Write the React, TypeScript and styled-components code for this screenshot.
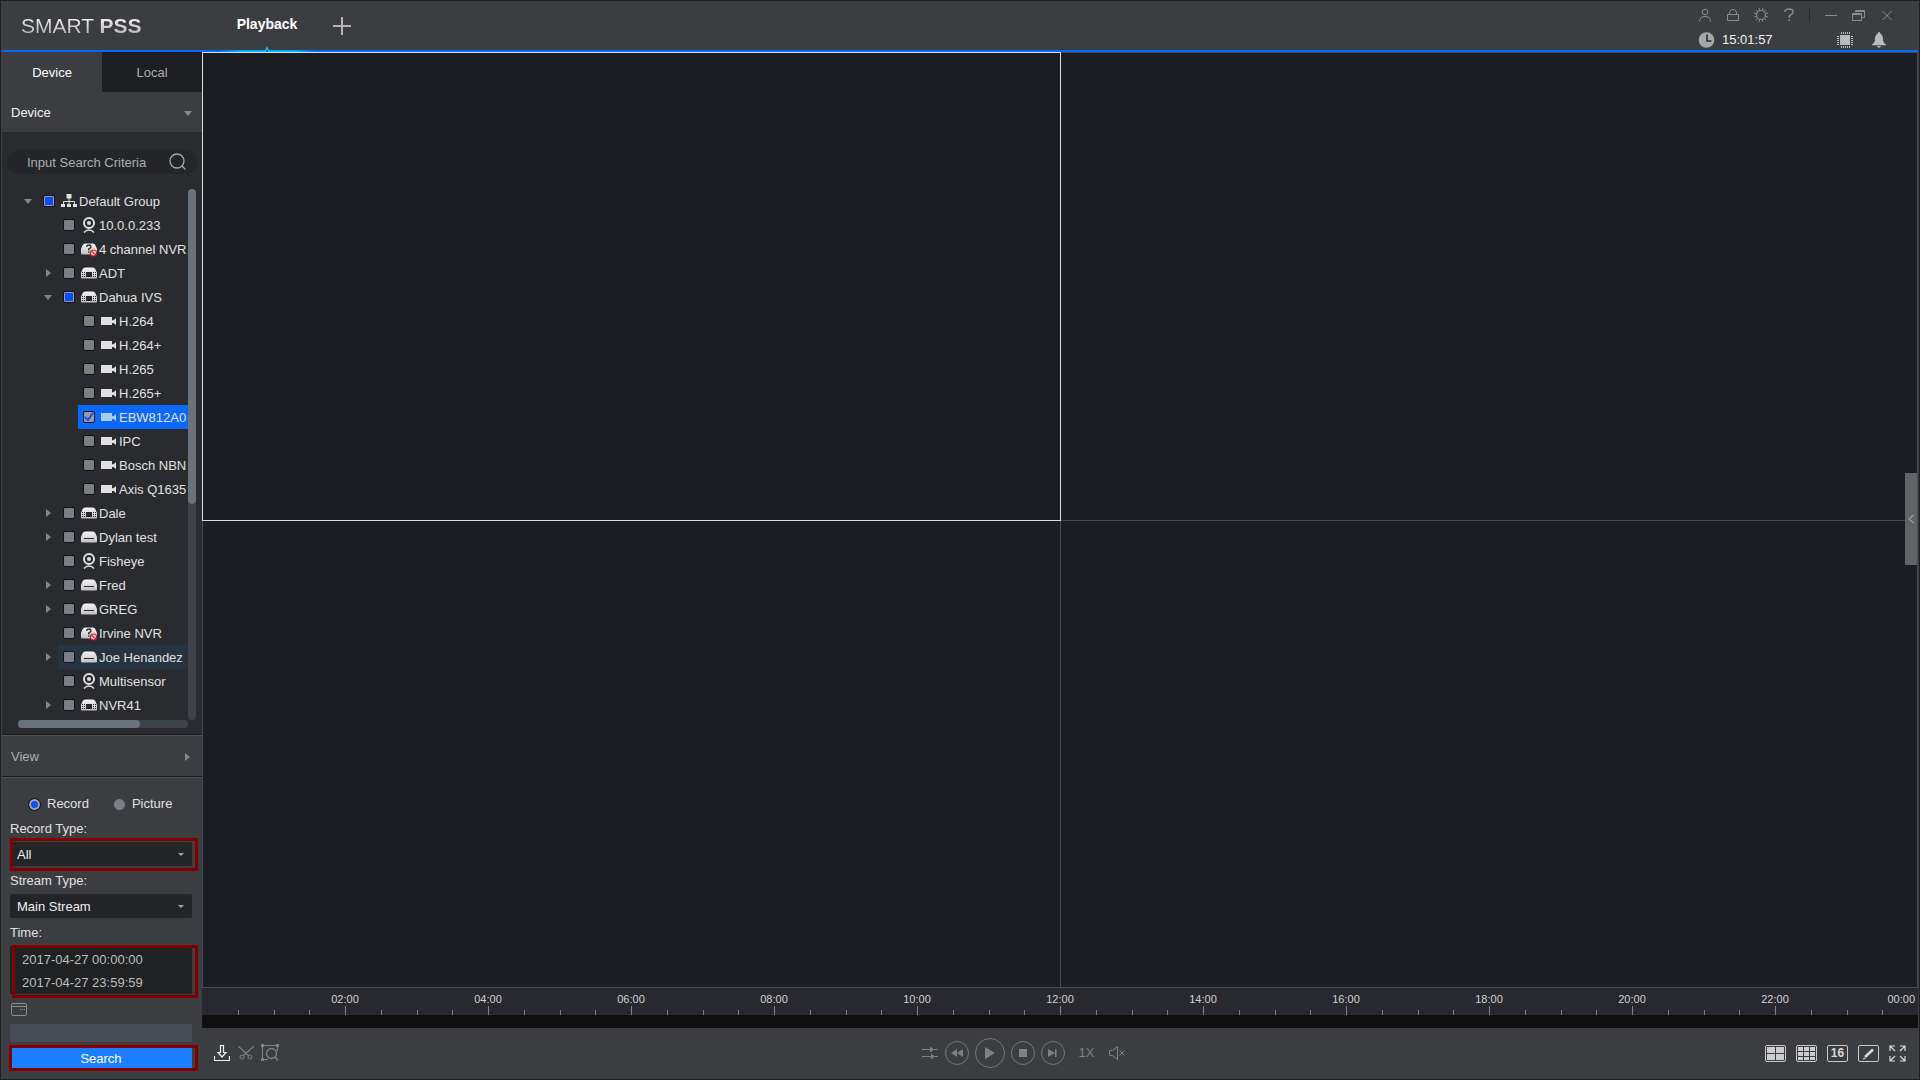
import React, { useState } from "react";
import styled, { createGlobalStyle, css } from "styled-components";

const c = {
  chrome: "#3b3d41",
  panel: "#2a2b2f",
  dark: "#1d1e22",
  video: "#1a1d21",
  line: "#454b5a",
  text: "#e0e0e0",
  muted: "#acadaf",
  icon: "#8b8c8f",
  arrow: "#858689",
  blue: "#0b68fb",
  marker: "#840000",
};

const GlobalStyle = createGlobalStyle`
  * { box-sizing: border-box; }
  body {
    margin: 0;
    background: #17181b;
    color: ${c.text};
    font: 13px/16px "Liberation Sans", Arial, sans-serif;
  }
  button, input, select { font: inherit; color: inherit; }
  button { padding: 0; border: 0; background: none; cursor: pointer; }
  ul, ol { margin: 0; padding: 0; list-style: none; }
`;

const Window = styled.div`
  display: flex;
  flex-direction: column;
  height: 100vh;
  min-height: 900px;
  padding: 0 1px 1px;
  background: ${c.chrome};
  border: 1px solid #1e1f22;
`;

const Header = styled.header`
  display: flex;
  height: 51px;
  flex: none;
  border-bottom: 2px solid ${c.blue};
`;

const Logo = styled.h1`
  width: 215px;
  margin: 0;
  padding: 13px 0 0 19px;
  font-size: 21px;
  line-height: 24px;
  font-weight: 400;
  color: transparent;
  background: linear-gradient(#f4f4f4 16px, #b4b4b4 34px);
  background-clip: text;
`;

const PageTab = styled.button`
  position: relative;
  width: 100px;
  height: 49px;
  padding-bottom: 4px;
  font-size: 14px;
  font-weight: 700;
  color: #fff;
  &::after {
    content: "";
    position: absolute;
    left: 0;
    right: 0;
    bottom: -2px;
    height: 2px;
    background: linear-gradient(90deg, ${c.blue}, #00b4f5 25%, #00b4f5 75%, ${c.blue});
  }
`;

const TabPointer = styled.svg`
  position: absolute;
  left: 47px;
  bottom: -2px;
  z-index: 1;
`;

const AddTab = styled.button`
  width: 50px;
  height: 50px;
  color: #b5b5b5;
  padding-top: 4px;
`;

const HeaderTools = styled.div`
  margin-left: auto;
  width: 227px;
  padding-right: 17px;
`;

const ToolRow = styled.div`
  display: flex;
  align-items: center;
  height: 24px;
  padding-top: 4px;
  &:last-child {
    height: 27px;
    padding: 2px 5px 0 7px;
  }
`;

const IconButton = styled.button<{ $w?: number }>`
  display: flex;
  align-items: center;
  justify-content: center;
  width: ${(p) => p.$w ?? 28}px;
  height: 22px;
  color: ${c.icon};
  svg { display: block; }
`;

const ToolSeparator = styled.span`
  width: 1px;
  height: 12px;
  margin: 0 7px 0 6px;
  background: #27282b;
`;

const Clock = styled.time`
  margin: 0 auto 0 7px;
  color: #f2f2f2;
`;

const Body = styled.div`
  display: flex;
  flex: 1;
  min-height: 0;
`;

const Sidebar = styled.aside`
  display: flex;
  flex-direction: column;
  width: 200px;
  flex: none;
`;

const Tabs = styled.div`
  display: grid;
  grid-template-columns: 1fr 1fr;
  height: 40px;
`;

const Tab = styled.button<{ $active?: boolean }>`
  padding: 2px 0 0;
  color: ${(p) => (p.$active ? "#fff" : c.muted)};
  background: ${(p) => (p.$active ? "none" : c.dark)};
`;

const SectionButton = styled.button<{ $bordered?: boolean }>`
  display: flex;
  align-items: center;
  justify-content: space-between;
  height: 40px;
  flex: none;
  padding: 2px 10px 0 9px;
  color: #f2f2f2;
  svg { color: ${c.arrow}; }
  ${(p) =>
    p.$bordered &&
    css`
      height: 43px;
      padding-right: 12px;
      color: ${c.muted};
      border-top: 1px solid #1b1c1f;
      border-bottom: 1px solid #1b1c1f;
      box-shadow: inset 0 1px #505257, 0 1px #505257;
    `}
`;

const TreePanel = styled.section`
  display: flex;
  flex-direction: column;
  flex: 1;
  min-height: 0;
  padding: 18px 5px 6px;
  background: ${c.panel};
`;

const SearchField = styled.div`
  display: flex;
  align-items: center;
  height: 24px;
  flex: none;
  padding: 0 10px 0 20px;
  margin-bottom: 15px;
  border-radius: 12px;
  background: #242529;
  color: #a5a6a8;
  input {
    flex: 1;
    min-width: 0;
    padding: 2px 0 0;
    border: 0;
    outline: 0;
    background: none;
  }
  input::placeholder { color: ${c.muted}; opacity: 1; }
`;

const TreeBody = styled.div`
  display: grid;
  grid-template-columns: 1fr 8px;
  flex: 1;
  min-height: 0;
  padding-right: 1px;
`;

const TreeList = styled.ul`
  overflow: hidden;
  min-width: 0;
  padding-left: 11px;
`;

const TreeRow = styled.li<{ $level: number }>`
  display: flex;
  height: 24px;
  padding-left: ${(p) => p.$level * 20}px;
`;

const Expander = styled.button`
  display: flex;
  align-items: center;
  justify-content: center;
  width: 20px;
  flex: none;
  color: ${c.arrow};
`;

const TreeItem = styled.label<{ $state?: "selected" | "hover" }>`
  display: flex;
  align-items: center;
  flex: 1;
  padding-left: 5px;
  white-space: nowrap;
  background: ${(p) =>
    p.$state === "selected" ? c.blue : p.$state === "hover" ? "#263340" : "none"};
  svg {
    flex: none;
    margin: 0 2px 0 6px;
    color: ${(p) => (p.$state === "selected" ? "#a8cdf2" : "#e0e0e0")};
  }
`;

const TreeName = styled.span`
  padding-top: 2px;
`;

const CheckBox = styled.input<{ $partial?: boolean }>`
  appearance: none;
  width: 12px;
  height: 12px;
  flex: none;
  margin: 0;
  border: 1px solid #111214;
  border-radius: 2px;
  background: #7c7e86;
  ${(p) =>
    p.$partial &&
    css`
      background: #0a4dff;
      box-shadow: inset 0 0 0 1px #9a9ba0;
    `}
  &:checked {
    background: #9a9ba0 url("data:image/svg+xml,%3Csvg xmlns='http://www.w3.org/2000/svg' viewBox='0 0 10 10'%3E%3Cpath d='M1 5l3 3 5-7' fill='none' stroke='%230a4dff' stroke-width='2'/%3E%3C/svg%3E") center / 10px 10px no-repeat;
  }
`;

const ScrollTrack = styled.div<{ $horizontal?: boolean }>`
  border-radius: 4px;
  background: #3e4349;
  &::before {
    content: "";
    display: block;
    border-radius: 4px;
    background: #6b7279;
    width: ${(p) => (p.$horizontal ? "72%" : "8px")};
    height: ${(p) => (p.$horizontal ? "8px" : "59.4%")};
  }
  ${(p) => p.$horizontal && "height: 8px; flex: none; margin: 0 9px 0 11px;"}
`;

const Query = styled.form`
  display: flex;
  flex-direction: column;
  flex: none;
  padding: 19px 10px 10px 8px;
`;

const RadioRow = styled.div`
  display: flex;
  gap: 25px;
  padding-left: 19px;
  height: 16px;
  margin-bottom: 9px;
  label { display: flex; align-items: center; gap: 7px; }
  input {
    appearance: none;
    width: 11px;
    height: 11px;
    margin: 0;
    border-radius: 50%;
    background: #7c7e86;
  }
  input:checked {
    background: #0a4dff;
    border: 2px solid #a3a4a8;
    outline: 1px solid #111214;
  }
`;

const Field = styled.div<{ $marked?: boolean }>`
  position: relative;
  height: 24px;
  margin: 5px 0 7px;
  ${(p) =>
    p.$marked &&
    css`
      &::after {
        content: "";
        position: absolute;
        inset: -4px -6px -5px 0;
        border: 3px solid ${c.marker};
        pointer-events: none;
      }
    `}
  select {
    display: block;
    appearance: none;
    width: 100%;
    height: 24px;
    padding: 1px 8px 0 7px;
    border: 0;
    border-radius: 2px;
    background: #242529;
    color: #f0f0f0;
  }
  svg {
    position: absolute;
    right: 8px;
    top: 11px;
    color: #a2a3a5;
    pointer-events: none;
  }
`;

const TimeRange = styled.div`
  position: relative;
  display: grid;
  grid-template-rows: 1fr 1fr;
  height: 48px;
  margin: 5px 0 9px;
  padding: 2px 12px 0;
  background: #202122;
  color: #bdbdbd;
  input { width: 100%; padding: 0; border: 0; outline: 0; background: none; }
  &::after {
    content: "";
    position: absolute;
    inset: -1px -6px -4px 2px;
    border: 3px solid ${c.marker};
    pointer-events: none;
  }
`;

const CalendarButton = styled.button`
  width: 18px;
  height: 13px;
  color: #8b8c8f;
  svg { display: block; }
`;

const ResultStrip = styled.div`
  height: 18px;
  margin: 8px 0 6px;
  border-radius: 2px;
  background: #474b54;
`;

const SearchButton = styled.button`
  position: relative;
  height: 20px;
  margin-left: 2px;
  padding: 1px 2px 0 0;
  background: #1d7dff;
  color: #fff;
  &::after {
    content: "";
    position: absolute;
    inset: -3px -6px -3px -3px;
    border: 3px solid ${c.marker};
  }
`;

const Fields = styled.div`
  display: flex;
  flex-direction: column;
`;

const Main = styled.main`
  display: flex;
  flex-direction: column;
  flex: 1;
  min-width: 0;
`;

const VideoGrid = styled.div`
  position: relative;
  display: grid;
  grid-template: 1fr 1fr / 1fr 1fr;
  flex: 1;
  background: ${c.video};
  border: solid ${c.line};
  border-width: 0 1px 1px 0;
`;

const Pane = styled.div<{ $selected?: boolean }>`
  border: solid ${c.line};
  border-width: 1px 0 0 1px;
  ${(p) =>
    p.$selected &&
    css`
      z-index: 1;
      margin: 0 -1px -1px 0;
      border: 1px solid #dcdcdc;
    `}
`;

const DrawerHandle = styled.button`
  position: absolute;
  z-index: 2;
  top: calc(50% - 47px);
  right: 0;
  display: flex;
  align-items: center;
  justify-content: center;
  width: 12px;
  height: 92px;
  background: #606466;
  color: #979a9b;
`;

const Timeline = styled.div`
  height: 40px;
  flex: none;
  background: #28292e;
  border-bottom: 13px solid #0f0f0f;
`;

const HourLabels = styled.ol`
  display: grid;
  grid-template-columns: repeat(24, 1fr);
  height: 18px;
  padding-top: 3px;
  font-size: 11px;
  color: #d0d0d0;
`;

const HourLabel = styled.li<{ $start: number; $last?: boolean }>`
  grid-row: 1;
  grid-column: ${(p) => p.$start} / span ${(p) => (p.$last ? 1 : 2)};
  text-align: ${(p) => (p.$last ? "right" : "center")};
  padding-right: ${(p) => (p.$last ? 3 : 0)}px;
`;

const Ticks = styled.div`
  display: grid;
  grid-template-columns: repeat(48, 1fr);
  align-items: end;
  height: 9px;
`;

const Tick = styled.span<{ $major: boolean }>`
  height: ${(p) => (p.$major ? 9 : 5)}px;
  border-left: 1px solid #7f8186;
  &:first-child { border: 0; }
`;

const Controls = styled.footer`
  display: grid;
  grid-template-columns: 1fr auto 1fr;
  align-items: center;
  height: 50px;
  flex: none;
`;

const ControlGroup = styled.div<{ $kind: "edit" | "play" | "view" }>`
  display: flex;
  align-items: center;
  color: #808183;
  ${(p) => p.$kind === "edit" && "padding-left: 8px;"}
  ${(p) => p.$kind === "play" && "gap: 6px; margin-right: 74px;"}
  ${(p) => p.$kind === "view" && "gap: 10px; justify-content: flex-end; padding-right: 12px; color: #d8d8d8;"}
`;

const ControlButton = styled.button<{ $w?: number; $bright?: boolean }>`
  display: flex;
  align-items: center;
  justify-content: center;
  width: ${(p) => p.$w ?? 24}px;
  height: 32px;
  flex: none;
  color: ${(p) => (p.$bright ? "#f0f0f0" : "inherit")};
`;

const RoundButton = styled.button<{ $size?: number }>`
  display: flex;
  align-items: center;
  justify-content: center;
  width: ${(p) => p.$size ?? 24}px;
  height: ${(p) => p.$size ?? 24}px;
  border: 1px solid #77787b;
  border-radius: 50%;
`;

const LayoutButton = styled.button`
  display: flex;
  align-items: center;
  justify-content: center;
  width: 21px;
  height: 17px;
  border: 1px solid #c8c8c8;
  border-radius: 2px;
  font-size: 12px;
  font-weight: 700;
  line-height: 15px;
`;

/* ---- icons ---- */

const Svg = ({ w, h, children, ...rest }: any) => (
  <svg width={w} height={h} viewBox={`0 0 ${w} ${h}`} fill="none" stroke="currentColor" aria-hidden="true" {...rest}>
    {children}
  </svg>
);

const Down = () => (
  <Svg w={8} h={5} stroke="none"><path d="M0 0h8L4 5z" fill="currentColor" /></Svg>
);
const Right = () => (
  <Svg w={5} h={8} stroke="none"><path d="M0 0v8l5-4z" fill="currentColor" /></Svg>
);

const ShadeDefs = styled.svg`
  position: absolute;
`;

const Shade = () => (
  <ShadeDefs width="0" height="0" aria-hidden="true">
    <defs>
      <linearGradient id="shade" x1="0" y1="0" x2="0" y2="1">
        <stop offset="0" stopColor="#f6f6f6" />
        <stop offset="1" stopColor="#bfbfbf" />
      </linearGradient>
    </defs>
  </ShadeDefs>
);

type Kind = "group" | "fisheye" | "unknown" | "nvr" | "dvr" | "camera";

const HOUSING = "M4 2.500h8q1.800.3 2.800 2.500L16 8v4.500q0 1-1 1H1q-1 0-1-1V8l1.200-3Q2.200 2.800 4 2.500z";

const DeviceIcon = ({ kind }: { kind: Kind }) => {
  if (kind === "group")
    return (
      <Svg w={16} h={16}>
        <path d="M8 5v6M2.500 12V8.500h11V12" />
        <path d="M5.500 1h5v4.500h-5zM0 11h4v3H0zM6 11h4v3H6zM12 11h4v3h-4z" fill="currentColor" stroke="none" />
      </Svg>
    );
  if (kind === "fisheye")
    return (
      <Svg w={16} h={16}>
        <circle cx="8" cy="6" r="5" strokeWidth="2" />
        <circle cx="8" cy="6" r="2" fill="currentColor" stroke="none" />
        <path d="M3 15.500Q5 13 8 13t5 2.500" strokeWidth="1.300" />
      </Svg>
    );
  if (kind === "camera")
    return (
      <Svg w={16} h={16} stroke="none">
        <path d="M0 4h11v3.200h1.500L15 5v7l-2.500-2H11v2H0z" fill="currentColor" />
      </Svg>
    );
  if (kind === "dvr")
    return (
      <Svg w={16} h={16}>
        <path d={HOUSING} fill="url(#shade)" stroke="none" />
        <path d="M3 9.500h10" stroke="#2a2b2f" />
      </Svg>
    );
  if (kind === "nvr")
    return (
      <Svg w={16} h={16}>
        <path d={HOUSING} fill="url(#shade)" stroke="none" />
        <path d="M5 7h6v5H5z" fill="#2a2b2f" stroke="none" />
        <path d="M1 7.500h4M1 9.500h4M1 11.500h4M12 7.500h4M12 9.500h4M12 11.500h4" stroke="#2a2b2f" strokeDasharray="1 1" />
      </Svg>
    );
  return (
    <Svg w={16} h={16}>
      <path d={HOUSING} fill="url(#shade)" stroke="none" />
      <path d="M5.500 5.800Q5.800 4 7.800 4T10 5.800Q10 7 7.800 8v1.500M7.800 10.500v1.200" stroke="#2a2b2f" strokeWidth="1.400" />
      <circle cx="12.500" cy="12" r="3" fill="#fff" stroke="#d8141c" strokeWidth="1.200" />
      <path d="M10.500 10l4 4" stroke="#d8141c" strokeWidth="1.300" />
    </Svg>
  );
};

/* ---- data ---- */

type Node = {
  name: string;
  level: number;
  kind: Kind;
  open?: boolean;
  partial?: boolean;
  checked?: boolean;
  state?: "selected" | "hover";
};

const NODES: Node[] = [
  { name: "Default Group", level: 0, kind: "group", open: true, partial: true },
  { name: "10.0.0.233", level: 1, kind: "fisheye" },
  { name: "4 channel NVR", level: 1, kind: "unknown" },
  { name: "ADT", level: 1, kind: "nvr", open: false },
  { name: "Dahua IVS", level: 1, kind: "nvr", open: true, partial: true },
  { name: "H.264", level: 2, kind: "camera" },
  { name: "H.264+", level: 2, kind: "camera" },
  { name: "H.265", level: 2, kind: "camera" },
  { name: "H.265+", level: 2, kind: "camera" },
  { name: "EBW812A0", level: 2, kind: "camera", checked: true, state: "selected" },
  { name: "IPC", level: 2, kind: "camera" },
  { name: "Bosch NBN", level: 2, kind: "camera" },
  { name: "Axis Q1635", level: 2, kind: "camera" },
  { name: "Dale", level: 1, kind: "nvr", open: false },
  { name: "Dylan test", level: 1, kind: "dvr", open: false },
  { name: "Fisheye", level: 1, kind: "fisheye" },
  { name: "Fred", level: 1, kind: "dvr", open: false },
  { name: "GREG", level: 1, kind: "dvr", open: false },
  { name: "Irvine NVR", level: 1, kind: "unknown" },
  { name: "Joe Henandez", level: 1, kind: "dvr", open: false, state: "hover" },
  { name: "Multisensor", level: 1, kind: "fisheye" },
  { name: "NVR41", level: 1, kind: "nvr", open: false },
];

const HOURS = Array.from({ length: 11 }, (_, i) => (i + 1) * 2);

const TitleBar = () => (
  <Header>
    <Logo>SMART <b>PSS</b></Logo>
    <PageTab>
      Playback
      <TabPointer width="6" height="6" viewBox="0 0 6 6"><path d="M3 0l3 6H0z" fill="#00c0ff" /><path d="M3 4v2" stroke="#1a1d21" /></TabPointer>
    </PageTab>
    <AddTab aria-label="New tab">
      <Svg w={18} h={18} strokeWidth="2"><path d="M9 0v18M0 9h18" /></Svg>
    </AddTab>
    <HeaderTools>
      <ToolRow>
        <IconButton aria-label="User">
          <Svg w={14} h={14}><circle cx="7" cy="4" r="2.800" /><path d="M1.500 13.500q0-5 5.500-5t5.500 5" /></Svg>
        </IconButton>
        <IconButton aria-label="Lock">
          <Svg w={14} h={14}><path d="M1.500 6.500h11v6h-11zM3.500 6.500V4.500q0-3 3.500-3t3.500 3v2" /></Svg>
        </IconButton>
        <IconButton aria-label="Settings">
          <Svg w={14} h={14}>
            <circle cx="7" cy="7" r="4.500" strokeWidth="1.200" />
            <path d="M5 0l.5 2.700M9 0l-.5 2.700M5 14l.5-2.700M9 14l-.5-2.700M0 5l2.700.5M0 9l2.700-.5M14 5l-2.700.5M14 9l-2.700-.5M2 2l1.700 1.700M12 2l-1.700 1.700M2 12l1.700-1.700M12 12l-1.700-1.700" />
          </Svg>
        </IconButton>
        <IconButton aria-label="Help">
          <Svg w={10} h={14} strokeWidth="1.500"><path d="M1 4Q1 1 5 1t4 3Q9 6 6.500 7 5 7.800 5 10M5 11.500V13" /></Svg>
        </IconButton>
        <ToolSeparator />
        <IconButton aria-label="Minimize"><Svg w={12} h={13}><path d="M0 6.500h12" /></Svg></IconButton>
        <IconButton aria-label="Restore">
          <Svg w={14} h={13}><path d="M3.500 3V1.500h9v7H10M3 2.500h9M.500 4.500h9v7h-9zM.500 5.500h9" /></Svg>
        </IconButton>
        <IconButton aria-label="Close"><Svg w={10} h={13}><path d="M.500 2l9 9M9.500 2l-9 9" /></Svg></IconButton>
      </ToolRow>
      <ToolRow>
        <Svg w={17} h={16} stroke="none">
          <circle cx="8.500" cy="8" r="7.800" fill="#a6a7a9" />
          <path d="M9 2.500V9h4.500" stroke="#2d2e31" strokeWidth="1.600" />
        </Svg>
        <Clock>15:01:57</Clock>
        <IconButton $w={34} aria-label="CPU">
          <Svg w={16} h={16}>
            <path d="M3 3h10v10H3z" fill="#b9babb" stroke="none" />
            <path d="M4 1h9M4 15h9M1 4v9M15 4v9" strokeWidth="2" strokeDasharray="1 1" stroke="#b9babb" />
          </Svg>
        </IconButton>
        <IconButton $w={34} aria-label="Alarms">
          <Svg w={14} h={16} stroke="none">
            <path d="M7 0a1.600 1.600 0 0 1 1.400 1.800Q11 3 11 7q0 3.500 3 5.500v.8H0v-.8Q3 10.500 3 7q0-4 2.600-5.200A1.600 1.600 0 0 1 7 0zM5 14h4q-.5 1.800-2 1.800T5 14z" fill="#b9babb" />
          </Svg>
        </IconButton>
      </ToolRow>
    </HeaderTools>
  </Header>
);

const DeviceTree = () => {
  const [checked, setChecked] = useState(() => NODES.map((n) => !!n.checked));
  return (
    <TreePanel>
      <SearchField>
        <input type="text" placeholder="Input Search Criteria" aria-label="Input Search Criteria" />
        <Svg w={18} h={18}><circle cx="8" cy="8" r="7" strokeWidth="1.300" /><path d="M13 13l3.500 3.500" strokeWidth="1.300" /></Svg>
      </SearchField>
      <TreeBody>
        <TreeList>
          {NODES.map((n, i) => (
            <TreeRow key={n.name} $level={n.level}>
              <Expander as={n.open === undefined ? "span" : "button"} aria-label={n.open === undefined ? undefined : `Toggle ${n.name}`}>
                {n.open === true && <Down />}
                {n.open === false && <Right />}
              </Expander>
              <TreeItem $state={n.state}>
                <CheckBox
                  type="checkbox"
                  $partial={n.partial}
                  checked={checked[i]}
                  onChange={() => setChecked(checked.map((v, k) => (k === i ? !v : v)))}
                />
                <DeviceIcon kind={n.kind} />
                <TreeName>{n.name}</TreeName>
              </TreeItem>
            </TreeRow>
          ))}
        </TreeList>
        <ScrollTrack />
      </TreeBody>
      <ScrollTrack $horizontal />
    </TreePanel>
  );
};

const QueryForm = () => (
  <Query onSubmit={(e) => e.preventDefault()}>
    <RadioRow>
      <label><input type="radio" name="source" defaultChecked />Record</label>
      <label><input type="radio" name="source" />Picture</label>
    </RadioRow>
    <Fields>
      <label htmlFor="record-type">Record Type:</label>
      <Field $marked>
        <select id="record-type"><option>All</option></select>
        <Svg w={6} h={3} stroke="none"><path d="M0 0h6L3 3z" fill="currentColor" /></Svg>
      </Field>
      <label htmlFor="stream-type">Stream Type:</label>
      <Field>
        <select id="stream-type"><option>Main Stream</option></select>
        <Svg w={6} h={3} stroke="none"><path d="M0 0h6L3 3z" fill="currentColor" /></Svg>
      </Field>
      <label htmlFor="time-from">Time:</label>
      <TimeRange>
        <input id="time-from" type="text" defaultValue="2017-04-27 00:00:00" />
        <input type="text" aria-label="End time" defaultValue="2017-04-27 23:59:59" />
      </TimeRange>
      <CalendarButton type="button" aria-label="Calendar">
        <Svg w={18} h={13}>
          <rect x="1.500" y=".500" width="15" height="12" rx="1.500" />
          <path d="M1 3.500h16" />
          <path d="M10 6.500h5" strokeDasharray="1 1" />
        </Svg>
      </CalendarButton>
      <ResultStrip />
      <SearchButton type="submit">Search</SearchButton>
    </Fields>
  </Query>
);

const VideoWall = () => (
  <VideoGrid>
    <Pane $selected />
    <Pane />
    <Pane />
    <Pane />
    <DrawerHandle aria-label="Open drawer">
      <Svg w={6} h={10} strokeWidth="1.500"><path d="M5.500 1L1 5l4.500 4" /></Svg>
    </DrawerHandle>
  </VideoGrid>
);

const TimeRuler = () => (
  <Timeline>
    <HourLabels>
      {HOURS.map((h) => (
        <HourLabel key={h} $start={h}>{String(h).padStart(2, "0")}:00</HourLabel>
      ))}
      <HourLabel $start={24} $last>00:00</HourLabel>
    </HourLabels>
    <Ticks>
      {Array.from({ length: 48 }, (_, i) => <Tick key={i} $major={i % 4 === 0} />)}
    </Ticks>
  </Timeline>
);

const cells = (cols: number, rows: number, w: number, h: number) => {
  const out = [];
  for (let r = 0; r < rows; r++)
    for (let k = 0; k < cols; k++)
      out.push(<rect key={`${r}-${k}`} x={k * (w + 1)} y={r * (h + 1)} width={w} height={h} fill="#cdcdcd" />);
  return out;
};

const PlayerControls = () => (
  <Controls>
    <ControlGroup $kind="edit">
      <ControlButton $bright aria-label="Download">
        <Svg w={16} h={16}><path d="M.500 11v4.500h15V11M6.500 .500h3v7h2.500L8 12 4 7.500h2.500z" strokeWidth="1.200" /></Svg>
      </ControlButton>
      <ControlButton aria-label="Clip">
        <Svg w={16} h={16}><path d="M0 1l11 10M16 1L5 11" strokeWidth="1.200" /><circle cx="4" cy="12" r="2" /><circle cx="12" cy="12" r="2" /></Svg>
      </ControlButton>
      <ControlButton aria-label="Smart search">
        <Svg w={18} h={18}>
          <path d="M1.500 3v12M3 1.500h12M16.500 3v4M3 15.500h4" />
          <path d="M0 0h3v3H0zM15 0h3v3h-3zM0 14h3v3H0z" fill="currentColor" stroke="none" />
          <circle cx="10.500" cy="9.500" r="5" strokeWidth="1.300" /><path d="M14 13l3 3.500" strokeWidth="1.500" />
        </Svg>
      </ControlButton>
    </ControlGroup>
    <ControlGroup $kind="play">
      <ControlButton $w={17} aria-label="Sync">
        <Svg w={17} h={14}>
          <path d="M0 3.500h8M12 3.500h3.500M0 10.500h9M13 10.500h3" />
          <path d="M8 .500l4 3-4 3zM9 7.500l4 3-4 3z" fill="currentColor" stroke="none" />
        </Svg>
      </ControlButton>
      <RoundButton aria-label="Reverse"><Svg w={12} h={8} stroke="none"><path d="M6 0v8L0 4zM12 0v8L6 4z" fill="currentColor" /></Svg></RoundButton>
      <RoundButton $size={30} aria-label="Play"><Svg w={11} h={12} stroke="none"><path d="M1 0l10 6-10 6z" fill="currentColor" /></Svg></RoundButton>
      <RoundButton aria-label="Stop"><Svg w={8} h={8} stroke="none"><path d="M0 0h8v8H0z" fill="currentColor" /></Svg></RoundButton>
      <RoundButton aria-label="Next frame"><Svg w={9} h={8} stroke="none"><path d="M0 0l7 4-7 4zM7 0h1.500v8H7z" fill="currentColor" /></Svg></RoundButton>
      <ControlButton $w={32} aria-label="Speed">1X</ControlButton>
      <ControlButton $w={16} aria-label="Mute">
        <Svg w={16} h={14}><path d="M.500 4.500h3L8.500 .500v13l-5-4h-3zM10.500 4.500l5 5M15.500 4.500l-5 5" /></Svg>
      </ControlButton>
    </ControlGroup>
    <ControlGroup $kind="view">
      <LayoutButton aria-label="4 panes"><Svg w={17} h={13} stroke="none">{cells(2, 2, 8, 6)}</Svg></LayoutButton>
      <LayoutButton aria-label="9 panes"><Svg w={17} h={13} stroke="none">{cells(3, 3, 5, 4)}</Svg></LayoutButton>
      <LayoutButton>16</LayoutButton>
      <LayoutButton aria-label="Custom layout">
        <Svg w={13} h={13}><path d="M3 10l8-7.500" strokeWidth="2.600" /><path d="M1 12l2.500-1" strokeWidth="1.200" /></Svg>
      </LayoutButton>
      <ControlButton $w={17} aria-label="Full screen">
        <Svg w={17} h={17} strokeWidth="1.200"><path d="M6 1H1v5M1 1l5 5M11 1h5v5M16 1l-5 5M6 16H1v-5M1 16l5-5M11 16h5v-5M16 16l-5-5" /></Svg>
      </ControlButton>
    </ControlGroup>
  </Controls>
);

export default function App() {
  return (
    <Window>
      <GlobalStyle />
      <Shade />
      <TitleBar />
      <Body>
        <Sidebar>
          <Tabs>
            <Tab $active>Device</Tab>
            <Tab>Local</Tab>
          </Tabs>
          <SectionButton>Device <Down /></SectionButton>
          <DeviceTree />
          <SectionButton $bordered>View <Right /></SectionButton>
          <QueryForm />
        </Sidebar>
        <Main>
          <VideoWall />
          <TimeRuler />
          <PlayerControls />
        </Main>
      </Body>
    </Window>
  );
}
